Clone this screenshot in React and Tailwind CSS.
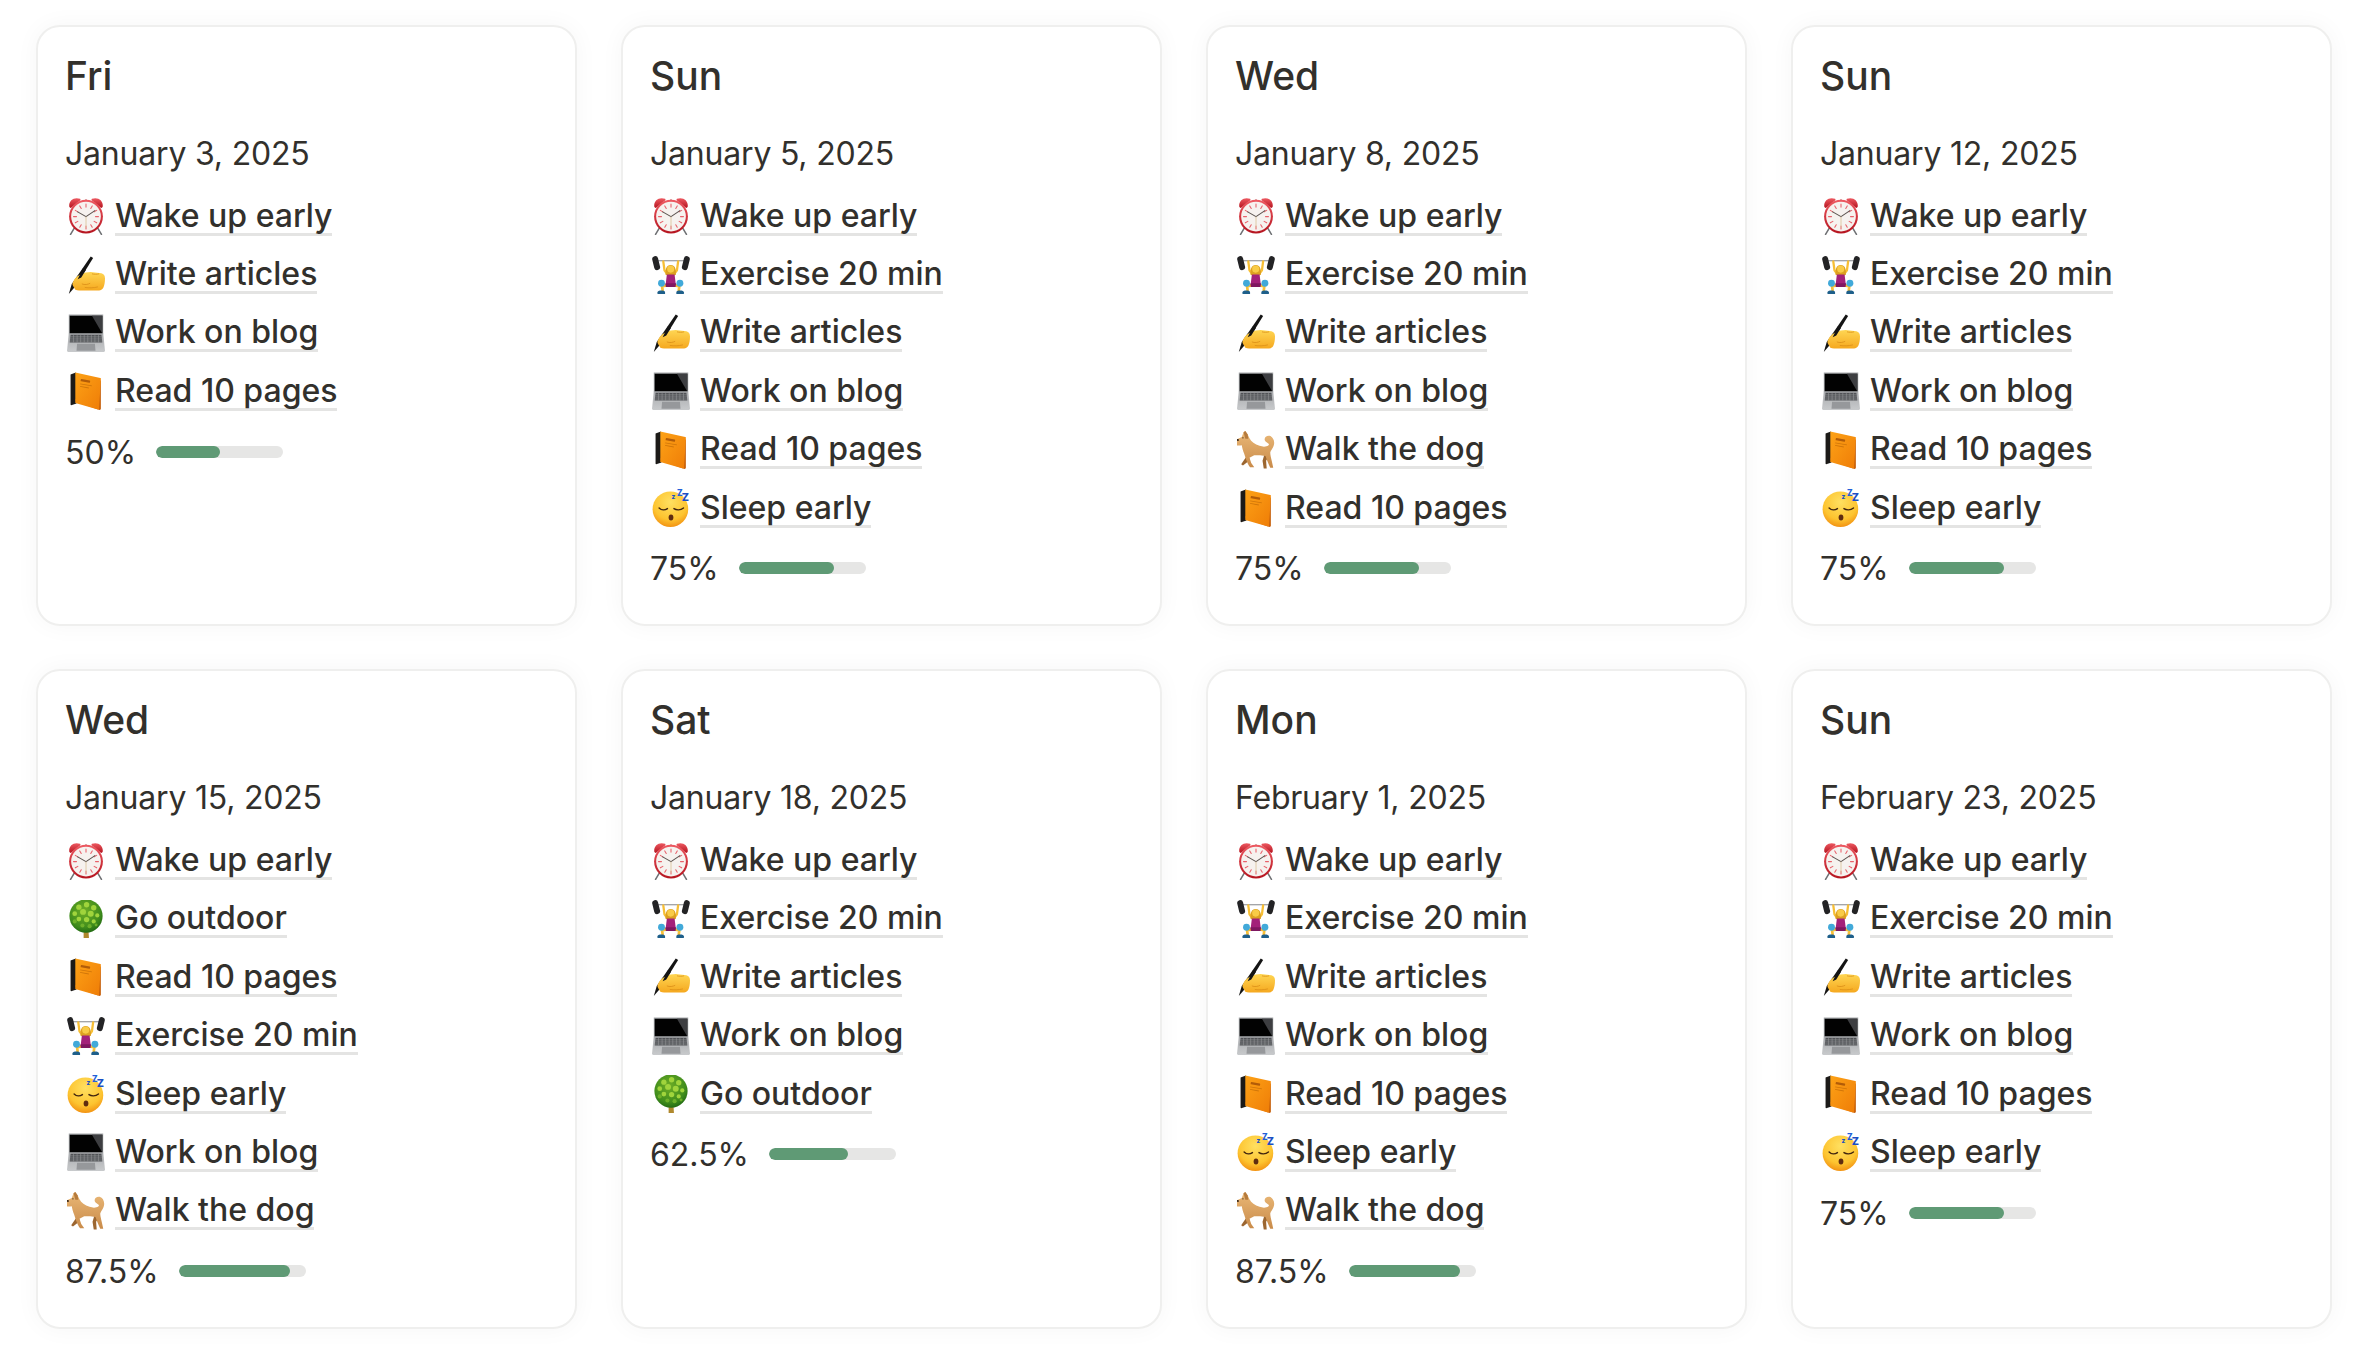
// small drawn emoji, all on a 64x64 box
const Clock = () => (
  <svg viewBox="0 0 64 64" className="h-full w-full">
    <defs>
      <linearGradient id="clockRed" x1="0" y1="0" x2="0" y2="1">
        <stop offset="0" stopColor="#ee5a62" />
        <stop offset="1" stopColor="#b5141f" />
      </linearGradient>
    </defs>
    <path d="M12 53l-6 10M52 53l6 10" stroke="#6f7174" strokeWidth="2.6" strokeLinecap="round" />
    <path d="M32 4v6" stroke="#a13035" strokeWidth="2.5" />
    <path d="M4 17C2 7 11 -1 22 3c1 1 1 2 0 3L7 18c-1 1-2 0-3-1z" fill="url(#clockRed)" />
    <path d="M60 17C62 7 53 -1 42 3c-1 1-1 2 0 3l15 12c1 1 2 0 3-1z" fill="url(#clockRed)" />
    <circle cx="32" cy="33" r="28.5" fill="url(#clockRed)" />
    <circle cx="32" cy="33" r="25" fill="#f6f2ef" />
    <g stroke="#e8616a" strokeWidth="1.8" strokeLinecap="round">
      <path d="M32 12v5M32 49v5M11 33h5M48 33h5M21.5 15l2.5 4.3M42.5 15l-2.5 4.3M14 22.5l4.3 2.5M50 22.5l-4.3 2.5M14 43.5l4.3-2.5M50 43.5l-4.3-2.5M21.5 51l2.5-4.3M42.5 51l-2.5-4.3" />
    </g>
    <path d="M32 33L18 25M32 33L47 23" stroke="#5a524e" strokeWidth="1.8" strokeLinecap="round" />
    <path d="M32 33v19" stroke="#dcc6a0" strokeWidth="1.5" />
  </svg>
);

const WritingHand = () => (
  <svg viewBox="0 0 64 64" className="h-full w-full">
    <defs>
      <linearGradient id="handFill" x1="0" y1="0" x2="0" y2="1">
        <stop offset="0" stopColor="#ffd653" />
        <stop offset="1" stopColor="#f5a81f" />
      </linearGradient>
    </defs>
    <path d="M40 1l4 2.500L15 50 3 64l5-17z" fill="#141414" />
    <path d="M9 47c2-7 6-12 12-15 8-4 14-5 19-5l18 2c4 1 6 4 6 9 0 6-1 12-3 16-2 3-4 4-7 4H28c-6 0-10 1-14-1-1-3-4-6-5-10z" fill="url(#handFill)" />
    <path d="M25 47c5 2 10 1 14-1M30 53c7 1 14 1 22-1M42 30c4 1 8 1 12 0" stroke="#d98d16" strokeWidth="1.300" fill="none" />
    <path d="M27 20l5 3-8 13-6 3z" fill="#141414" />
  </svg>
);

const Laptop = () => (
  <svg viewBox="0 0 64 64" className="h-full w-full">
    <defs>
      <linearGradient id="lapBase" x1="0" y1="0" x2="0" y2="1">
        <stop offset="0" stopColor="#a9abae" />
        <stop offset="1" stopColor="#c8cacc" />
      </linearGradient>
    </defs>
    <path d="M3 1h58v33H3z" fill="#a5a7aa" />
    <path d="M4.5 3h55v30h-55z" fill="#020202" />
    <path d="M42 3h17.5v30z" fill="#3d3e41" />
    <path d="M3 33h58l3 29c0 1-1 2-2 2H2c-1 0-2-1-2-2z" fill="url(#lapBase)" />
    <path d="M6 35h52l1.500 13H4.500z" fill="#505256" />
    <g stroke="#9a9c9f" strokeWidth="0.9">
      <path d="M5.500 38.500h53M5 42h54M4.700 45.500h54.600" />
      <path d="M11 35v13M17 35v13M23 35v13M29 35v13M35 35v13M41 35v13M47 35v13M53 35v13" />
    </g>
    <path d="M17 50h30l1 12H16z" fill="#96989b" />
  </svg>
);

const Book = () => (
  <svg viewBox="0 0 64 64" className="h-full w-full">
    <defs>
      <linearGradient id="bookFill" x1="0" y1="0" x2="1" y2="1">
        <stop offset="0" stopColor="#fda216" />
        <stop offset="1" stopColor="#ef7d07" />
      </linearGradient>
    </defs>
    <path d="M6 4l9-3 1 52-9 3c-1 0-1-1-1-2z" fill="#1c1a18" />
    <path d="M15 50l40 14c1 0 2-1 2-2V14l-5 2-2 44L14 46z" fill="#c65e08" />
    <path d="M14 1l42 9c1 0 1 1 1 2l-3 50c0 1-1 1-2 1L14 52z" fill="url(#bookFill)" />
    <rect x="23" y="13" width="16" height="4" rx="1" fill="#b25c08" transform="rotate(10 31 15)" />
    <rect x="22" y="21" width="20" height="1.4" fill="#cf7509" transform="rotate(10 32 22)" />
    <rect x="22" y="25" width="15" height="1.4" fill="#cf7509" transform="rotate(10 30 25)" />
  </svg>
);

const Lifter = () => (
  <svg viewBox="0 0 64 64" className="h-full w-full">
    <path d="M8 8h48" stroke="#8b8d90" strokeWidth="1.800" />
    <rect x="2" y="0" width="10" height="24" rx="5" fill="#232325" transform="rotate(-14 7 12)" />
    <rect x="52" y="0" width="10" height="24" rx="5" fill="#232325" transform="rotate(14 57 12)" />
    <path d="M19 9l2 15 6 8M44 9l-2 15-6 8" stroke="#f7bf36" strokeWidth="3.800" strokeLinecap="round" strokeLinejoin="round" fill="none" />
    <path d="M23 32c-1-7 0-17 8.500-17S41 25 40 32z" fill="#dca021" />
    <circle cx="31.500" cy="22" r="6" fill="#f9cb47" />
    <path d="M25 31h13l2 16H23z" fill="#a32179" />
    <path d="M23 46h17l3 6H20z" fill="#7f1760" />
    <path d="M23 50l-6 1 1 8" stroke="#f7bf36" strokeWidth="4.500" fill="none" />
    <path d="M40 50l6 1-1 8" stroke="#f7bf36" strokeWidth="4.500" fill="none" />
    <circle cx="16" cy="46" r="5.800" fill="#41a9d9" />
    <circle cx="47" cy="46" r="5.800" fill="#41a9d9" />
    <path d="M9 62c0-3 3-4 7-4s6 1 6 3v3H10c-1 0-1-1-1-2zM54 62c0-3-3-4-7-4s-6 1-6 3v3h12c1 0 1-1 1-2z" fill="#1e5f8a" />
  </svg>
);

const Sleeping = () => (
  <svg viewBox="0 0 64 64" className="h-full w-full">
    <defs>
      <radialGradient id="faceFill" cx="0.5" cy="0.3" r="0.75">
        <stop offset="0" stopColor="#ffe061" />
        <stop offset="0.65" stopColor="#fdc430" />
        <stop offset="1" stopColor="#f0880c" />
      </radialGradient>
    </defs>
    <circle cx="31" cy="34" r="30" fill="url(#faceFill)" />
    <path d="M12 32c4 4 10 4 14 1M37 33c4 3 11 3 16-1" stroke="#40240e" strokeWidth="2.400" fill="none" strokeLinecap="round" />
    <ellipse cx="32" cy="48" rx="4" ry="5" fill="#5f2c10" />
    <text x="33" y="17" fontSize="11" fontWeight="800" fill="#1b4fc4" fontFamily="Inter, sans-serif">z</text>
    <text x="42" y="12" fontSize="14" fontWeight="800" fill="#2360d8" fontFamily="Inter, sans-serif">Z</text>
    <text x="50" y="21" fontSize="18" fontWeight="800" fill="#1b4fc4" fontFamily="Inter, sans-serif">Z</text>
  </svg>
);

const Dog = () => (
  <svg viewBox="0 0 64 64" className="h-full w-full">
    <defs>
      <linearGradient id="dogFill" x1="0" y1="0" x2="0" y2="1">
        <stop offset="0" stopColor="#eab877" />
        <stop offset="1" stopColor="#c98b4a" />
      </linearGradient>
    </defs>
    <path d="M18 40l-7 10-4 6 3 2 12-9zM46 40l-3 10 2 13h5l-1-13 5-8z" fill="#9c6630" />
    <path d="M0 14l8-4 3-8 3-2 4 6 3 6c3 6 9 10 17 13 6 2 11 2 15-1 3-3-4-4-6-8-2-5 3-9 8-8 6 2 9 9 7 16-1 5-5 8-6 12 0 6 3 14 5 26h-5c-3-7-6-14-8-20l-9-1-10 0-8 4 3 9 5 7h-7c-3-4-5-9-7-14l-3-9c-2-5-3-9-4-14-5 1-10 1-13-2-2-2-1-3 0-4z" fill="url(#dogFill)" />
    <path d="M11 2l3-2 4 6 1 7-5 0z" fill="#b57a3c" />
    <circle cx="1.500" cy="15" r="1.700" fill="#2c1b0e" />
    <circle cx="10" cy="11.500" r="1.100" fill="#2c1b0e" />
  </svg>
);

const Tree = () => (
  <svg viewBox="0 0 64 64" className="h-full w-full">
    <defs>
      <radialGradient id="treeFill" cx="0.45" cy="0.35" r="0.7">
        <stop offset="0" stopColor="#6fae26" />
        <stop offset="0.7" stopColor="#3f8c1c" />
        <stop offset="1" stopColor="#1d6412" />
      </radialGradient>
    </defs>
    <path d="M28 48h8l1 16h-9z" fill="#b0892e" />
    <circle cx="32" cy="27" r="28" fill="url(#treeFill)" />
    <g fill="#a0d43c">
      <circle cx="20" cy="12" r="4.500" />
      <circle cx="33" cy="8" r="4.500" />
      <circle cx="45" cy="13" r="4.500" />
      <circle cx="27" cy="20" r="5" />
      <circle cx="40" cy="23" r="5" />
      <circle cx="13" cy="23" r="4" />
      <circle cx="51" cy="26" r="3.500" />
      <circle cx="20" cy="32" r="4" />
      <circle cx="33" cy="33" r="4.500" />
      <circle cx="45" cy="36" r="3.500" />
    </g>
    <g fill="#6db02a">
      <circle cx="13" cy="36" r="3.500" />
      <circle cx="26" cy="43" r="3.500" />
      <circle cx="38" cy="44" r="3.500" />
      <circle cx="49" cy="42" r="2.500" />
    </g>
  </svg>
);

const habits = {
  wake: { icon: Clock, label: "Wake up early" },
  exercise: { icon: Lifter, label: "Exercise 20 min" },
  write: { icon: WritingHand, label: "Write articles" },
  blog: { icon: Laptop, label: "Work on blog" },
  read: { icon: Book, label: "Read 10 pages" },
  sleep: { icon: Sleeping, label: "Sleep early" },
  dog: { icon: Dog, label: "Walk the dog" },
  outdoor: { icon: Tree, label: "Go outdoor" },
};

const days = [
  { day: "Fri", date: "January 3, 2025", items: ["wake", "write", "blog", "read"], pct: 50 },
  { day: "Sun", date: "January 5, 2025", items: ["wake", "exercise", "write", "blog", "read", "sleep"], pct: 75 },
  { day: "Wed", date: "January 8, 2025", items: ["wake", "exercise", "write", "blog", "dog", "read"], pct: 75 },
  { day: "Sun", date: "January 12, 2025", items: ["wake", "exercise", "write", "blog", "read", "sleep"], pct: 75 },
  { day: "Wed", date: "January 15, 2025", items: ["wake", "outdoor", "read", "exercise", "sleep", "blog", "dog"], pct: 87.5 },
  { day: "Sat", date: "January 18, 2025", items: ["wake", "exercise", "write", "blog", "outdoor"], pct: 62.5 },
  { day: "Mon", date: "February 1, 2025", items: ["wake", "exercise", "write", "blog", "read", "sleep", "dog"], pct: 87.5 },
  { day: "Sun", date: "February 23, 2025", items: ["wake", "exercise", "write", "blog", "read", "sleep"], pct: 75 },
];

const DayCard = ({ day }) => (
  <div className="rounded-[24px] border-2 border-[#efefee] bg-white px-[27px] pt-[23px] pb-[26px] shadow-[0_0_24px_rgba(0,0,0,0.04)]">
    <div className="text-[39px] font-medium leading-[52px] text-[#32302c]">{day.day}</div>
    <div className="mt-[28px] text-[32px] leading-[48px] tracking-[-0.2px]">{day.date}</div>
    <div className="mt-[10px]">
      {day.items.map((key, i) => {
        const Icon = habits[key].icon;
        return (
          <div key={i} className="flex h-[58.4px] items-center">
            <span className="ml-[2px] mr-[10px] h-[38px] w-[38px] shrink-0 -translate-y-[1px]">
              <Icon />
            </span>
            <span className="inline-block border-b-[3px] border-[#e4e4e3] text-[32px] font-[450] leading-[34px]">
              {habits[key].label}
            </span>
          </div>
        );
      })}
    </div>
    <div className="mt-[2px] flex h-[58px] items-center gap-[20px]">
      <span className="text-[32px] leading-[40px]">{day.pct}%</span>
      <div className="h-[12px] w-[127px] -translate-y-[1px] overflow-hidden rounded-full bg-[#e6e6e5]">
        <div className="h-full rounded-full bg-[#5f9a75]" style={{ width: `${day.pct}%` }} />
      </div>
    </div>
  </div>
);

export default function App() {
  return (
    <div
      className="min-h-screen bg-white pt-[25px] pl-[36px] pr-[39px] text-[#32302c]"
      style={{ fontFamily: "Inter, 'Noto Sans', sans-serif" }}
    >
      <div className="grid grid-cols-4 gap-x-[44px] gap-y-[43px]">
        {days.map((day) => (
          <DayCard key={day.date} day={day} />
        ))}
      </div>
    </div>
  );
}
